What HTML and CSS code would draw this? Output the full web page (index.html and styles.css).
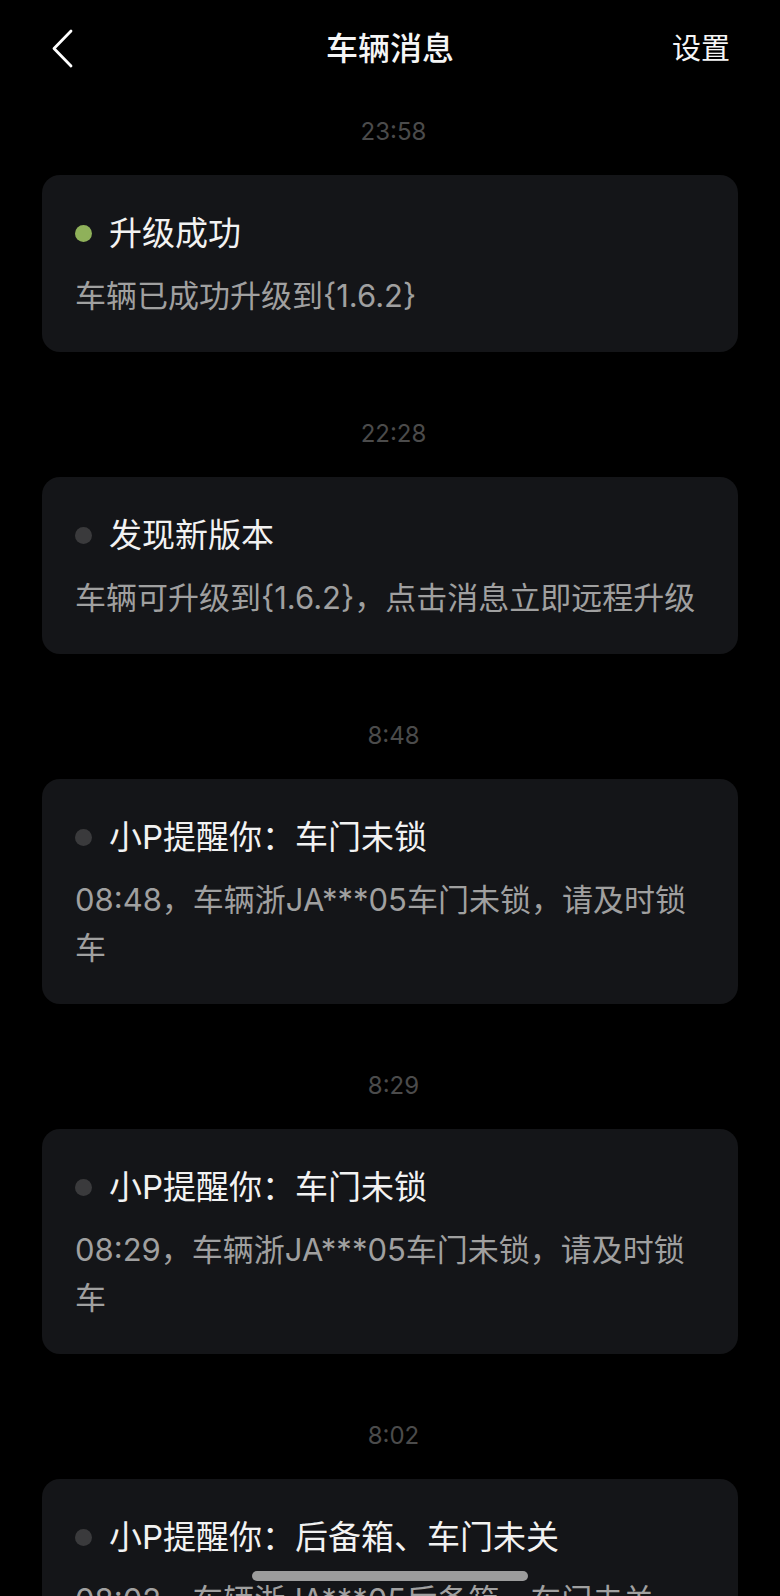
FILE: index.html
```html
<!DOCTYPE html>
<html lang="zh-CN">
<head>
<meta charset="utf-8">
<title>车辆消息</title>
<link rel="stylesheet" href="styles.css">
</head>
<body>
<div class="page">
  <header class="nav">
    <button class="nav-back" aria-label="返回">
      <svg width="24" height="40" viewBox="0 0 24 40"><path d="M20 2 L3 19.5 L20 37" fill="none" stroke="#ffffff" stroke-width="2.8" stroke-linecap="round" stroke-linejoin="round"/></svg>
    </button>
    <h1 class="nav-title">车辆消息</h1>
    <a class="nav-action">设置</a>
  </header>

  <main class="list">
    <section class="group">
      <div class="time">23:58</div>
      <div class="card">
        <div class="card-head"><span class="dot dot-new"></span><span class="card-title">升级成功</span></div>
        <p class="card-body">车辆已成功升级到{1.6.2}</p>
      </div>
    </section>

    <section class="group">
      <div class="time">22:28</div>
      <div class="card">
        <div class="card-head"><span class="dot"></span><span class="card-title">发现新版本</span></div>
        <p class="card-body">车辆可升级到{1.6.2}，点击消息立即远程升级</p>
      </div>
    </section>

    <section class="group">
      <div class="time">8:48</div>
      <div class="card">
        <div class="card-head"><span class="dot"></span><span class="card-title">小P提醒你：车门未锁</span></div>
        <p class="card-body">08:48，车辆浙JA***05车门未锁，请及时锁车</p>
      </div>
    </section>

    <section class="group">
      <div class="time">8:29</div>
      <div class="card">
        <div class="card-head"><span class="dot"></span><span class="card-title">小P提醒你：车门未锁</span></div>
        <p class="card-body">08:29，车辆浙JA***05车门未锁，请及时锁车</p>
      </div>
    </section>

    <section class="group">
      <div class="time">8:02</div>
      <div class="card">
        <div class="card-head"><span class="dot"></span><span class="card-title">小P提醒你：后备箱、车门未关</span></div>
        <p class="card-body">08:02，车辆浙JA***05后备箱、车门未关，请及时关闭</p>
      </div>
    </section>
  </main>
</div>
<div class="home-indicator"></div>
</body>
</html>
```

FILE: styles.css
```css
* { box-sizing: border-box; }

html, body {
  margin: 0;
  padding: 0;
  background: #000000;
}

body {
  font-family: "Inter", "Noto Sans CJK SC", "Noto Sans", sans-serif;
  color: #f2f2f2;
  height: 1596px;
  overflow: hidden;
}

.page {
  width: 780px;
}

.nav {
  height: 98px;
  display: flex;
  align-items: center;
  justify-content: space-between;
  padding: 0 50px 0 40px;
  position: relative;
}

.nav-back {
  width: 40px;
  height: 40px;
  padding: 0 0 0 11px;
  margin: 0;
  border: 0;
  background: none;
  display: flex;
  align-items: center;
  justify-content: flex-start;
}

.nav-back svg { display: block; }

.nav-title {
  margin: 0;
  font-size: 32px;
  font-weight: 500;
  line-height: 40px;
  color: #f5f5f5;
  position: absolute;
  left: 0;
  right: 0;
  text-align: center;
  pointer-events: none;
}

.nav-action {
  font-size: 29px;
  line-height: 40px;
  color: #f5f5f5;
}

.list {
  padding: 19px 42px 0;
}

.group {
  display: flex;
  flex-direction: column;
  gap: 28px;
  margin-bottom: 67px;
}

.time {
  text-align: center;
  padding-left: 7px;
  font-size: 24px;
  line-height: 30px;
  color: #4b4b4b;
}

.card {
  background: #141518;
  border-radius: 18px;
  padding: 36px 33px 32px 33px;
}

.card-head {
  display: flex;
  align-items: center;
  height: 44px;
}

.dot {
  width: 17px;
  height: 17px;
  border-radius: 50%;
  background: #3a3a3c;
  flex: none;
  margin-right: 17px;
}

.dot-new { background: #8fb15a; }

.card-title {
  font-size: 33px;
  line-height: 44px;
  color: #f2f2f2;
}

.card-body {
  margin: 17px 0 0;
  font-size: 31px;
  line-height: 48px;
  color: #a0a0a0;
}

.home-indicator {
  position: fixed;
  left: 252px;
  top: 1571px;
  width: 276px;
  height: 10px;
  border-radius: 5px;
  background: #9c9c9c;
}
```
